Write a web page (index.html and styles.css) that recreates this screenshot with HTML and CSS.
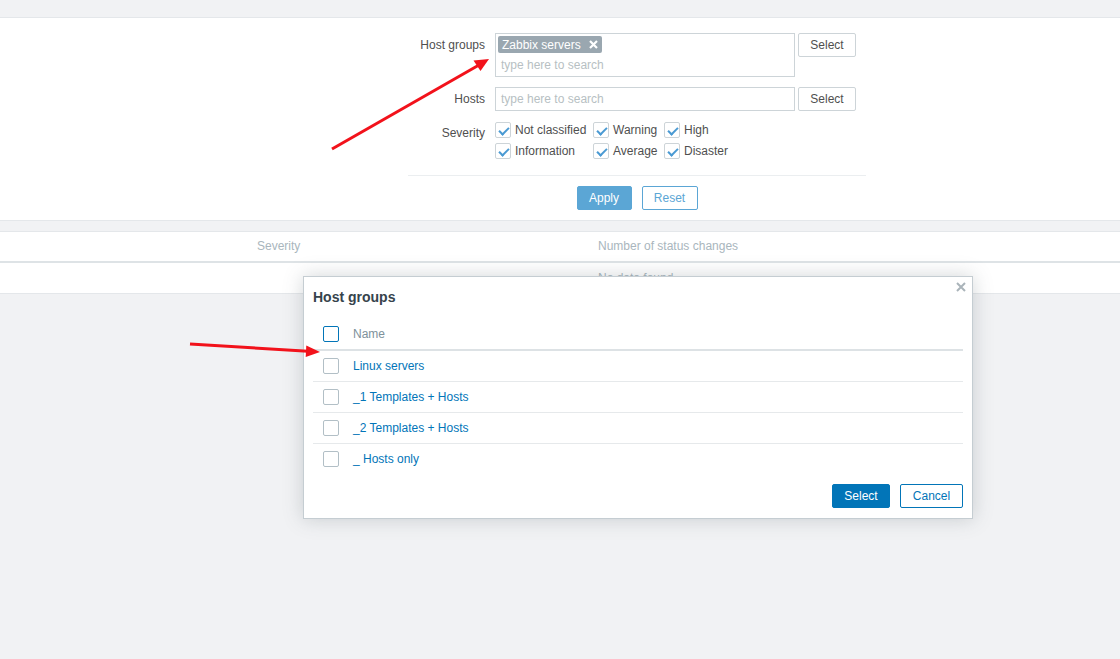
FILE: index.html
```html
<!DOCTYPE html>
<html lang="en">
<head>
    <meta charset="UTF-8">
    <title>Triggers top 100</title>
    <link rel="stylesheet" href="styles.css">
</head>
<body>
    <!-- Filter -->
    <div class="filter">
        <form class="filter-form">
            <label class="form-label">Host groups</label>
            <div class="form-field">
                <div class="multiselect">
                    <span class="tag">Zabbix servers
                        <svg class="tag-remove" width="9" height="9" viewBox="0 0 9 9"><path d="M1 1 L8 8 M8 1 L1 8"/></svg>
                    </span>
                    <span class="placeholder">type here to search</span>
                </div>
                <button type="button" class="btn-grey">Select</button>
            </div>

            <label class="form-label">Hosts</label>
            <div class="form-field">
                <div class="text-input"><span class="placeholder">type here to search</span></div>
                <button type="button" class="btn-grey">Select</button>
            </div>

            <label class="form-label">Severity</label>
            <div class="severity-list">
                <div class="check-item"><span class="checkbox checked"></span>Not classified</div>
                <div class="check-item"><span class="checkbox checked"></span>Warning</div>
                <div class="check-item"><span class="checkbox checked"></span>High</div>
                <div class="check-item"><span class="checkbox checked"></span>Information</div>
                <div class="check-item"><span class="checkbox checked"></span>Average</div>
                <div class="check-item"><span class="checkbox checked"></span>Disaster</div>
            </div>

            <div class="filter-buttons">
                <button type="button" class="btn-apply">Apply</button>
                <button type="button" class="btn-reset">Reset</button>
            </div>
        </form>
    </div>

    <!-- Results -->
    <div class="list-table">
        <div class="list-head">
            <div></div>
            <div>Severity</div>
            <div>Number of status changes</div>
        </div>
        <div class="list-empty">No data found.</div>
    </div>

    <!-- Host groups popup -->
    <div class="overlay-dialog">
        <svg class="dialog-close" width="10" height="10" viewBox="0 0 10 10"><path d="M1 1 L9 9 M9 1 L1 9"/></svg>
        <h4 class="dialog-title">Host groups</h4>
        <table class="dialog-table">
            <thead>
                <tr>
                    <th class="col-check"><span class="checkbox focused"></span></th>
                    <th>Name</th>
                </tr>
            </thead>
            <tbody>
                <tr>
                    <td class="col-check"><span class="checkbox"></span></td>
                    <td><a href="#">Linux servers</a></td>
                </tr>
                <tr>
                    <td class="col-check"><span class="checkbox"></span></td>
                    <td><a href="#">_1 Templates + Hosts</a></td>
                </tr>
                <tr>
                    <td class="col-check"><span class="checkbox"></span></td>
                    <td><a href="#">_2 Templates + Hosts</a></td>
                </tr>
                <tr>
                    <td class="col-check"><span class="checkbox"></span></td>
                    <td><a href="#">_ Hosts only</a></td>
                </tr>
            </tbody>
        </table>
        <div class="dialog-footer">
            <button type="button" class="btn-primary">Select</button>
            <button type="button" class="btn-alt">Cancel</button>
        </div>
    </div>

    <!-- Annotation arrows -->
    <svg class="annotations" width="1120" height="659" viewBox="0 0 1120 659">
        <line x1="332" y1="149" x2="479" y2="65"/>
        <polygon points="489,59 480.5,71 473.5,60.5"/>
        <line x1="190" y1="344" x2="308" y2="351.3"/>
        <polygon points="320,352 305.7,357 306.3,345.5"/>
    </svg>
</body>
</html>
```

FILE: styles.css
```css
* {
    margin: 0;
    padding: 0;
    box-sizing: border-box;
}

body {
    background: #f1f2f4;
    font-family: 'Liberation Sans', Arial, sans-serif;
    font-size: 12px;
    color: #4f4f4f;
    width: 1120px;
    height: 659px;
    overflow: hidden;
    position: relative;
}

button {
    font-family: inherit;
    font-size: 12px;
    cursor: pointer;
}

/* Filter */

.filter {
    margin-top: 17px;
    background: #fff;
    border-top: 1px solid #e4e7ea;
    border-bottom: 1px solid #e4e7ea;
    padding: 15px 0 10px;
}

.filter-form {
    width: 458px;
    margin-left: 408px;
    display: grid;
    grid-template-columns: 77px 1fr;
    column-gap: 10px;
    row-gap: 10px;
}

.form-label {
    text-align: right;
    padding-top: 5px;
    line-height: 14px;
}

.form-field {
    display: flex;
    align-items: flex-start;
    gap: 3px;
}

.multiselect {
    width: 300px;
    height: 44px;
    border: 1px solid #cdd4d8;
    padding: 2px;
    display: flex;
    flex-direction: column;
    align-items: flex-start;
    gap: 5px;
}

.tag {
    display: flex;
    align-items: center;
    gap: 8px;
    background: #9aa7b0;
    color: #fff;
    height: 17px;
    padding: 0 4px;
    border-radius: 2px;
}

.tag-remove path {
    stroke: #fff;
    stroke-width: 2.2;
}

.placeholder {
    color: #b7bfc3;
    padding-left: 3px;
}

.text-input {
    width: 300px;
    height: 24px;
    border: 1px solid #cdd4d8;
    padding: 4px 2px;
    line-height: 14px;
}

.btn-grey {
    width: 58px;
    height: 24px;
    background: #fff;
    border: 1px solid #cdd4d8;
    border-radius: 2px;
    color: #4f4f4f;
}

.severity-list {
    display: grid;
    grid-template-columns: 98px 71px auto;
    row-gap: 5px;
    margin-top: 1px;
}

.check-item {
    display: flex;
    align-items: center;
    gap: 4px;
    height: 16px;
}

.checkbox {
    position: relative;
    display: inline-block;
    width: 16px;
    height: 16px;
    border: 1px solid #b2bfc6;
    border-radius: 2px;
    background: #fff;
    flex-shrink: 0;
}

.checkbox.checked {
    border-color: #cdd4d8;
}

.checkbox.checked::after {
    content: "";
    position: absolute;
    left: 5px;
    top: 2px;
    width: 4px;
    height: 8px;
    border-right: 2px solid #4a9ad3;
    border-bottom: 2px solid #4a9ad3;
    transform: rotate(45deg);
}

.checkbox.focused {
    border-color: #0275b8;
}

.filter-buttons {
    grid-column: 1 / 3;
    display: flex;
    justify-content: center;
    gap: 10px;
    border-top: 1px solid #ebeef0;
    margin-top: 6px;
    padding-top: 10px;
}

.btn-apply {
    width: 55px;
    height: 24px;
    background: #5ba6d5;
    border: 1px solid #5ba6d5;
    border-radius: 2px;
    color: #fff;
}

.btn-reset {
    width: 56px;
    height: 24px;
    background: #fff;
    border: 1px solid #5ba6d5;
    border-radius: 2px;
    color: #5ba6d5;
}

/* Results table */

.list-table {
    margin-top: 10px;
    background: #fff;
    border-top: 1px solid #e4e7ea;
    border-bottom: 1px solid #e4e7ea;
}

.list-head {
    display: grid;
    grid-template-columns: 257px 341px 1fr;
    height: 31px;
    line-height: 29px;
    border-bottom: 2px solid #dee3e6;
    color: #a9b6bd;
}

.list-empty {
    height: 30px;
    line-height: 30px;
    padding-left: 598px;
    color: #a9b6bd;
}

/* Host groups popup */

.overlay-dialog {
    position: absolute;
    left: 303px;
    top: 276px;
    width: 670px;
    background: #fff;
    border: 1px solid #c5cdd2;
    box-shadow: 0 0 18px rgba(80, 90, 100, 0.25);
    padding: 0 9px 10px;
}

.dialog-close {
    position: absolute;
    right: 6px;
    top: 5px;
}

.dialog-close path {
    stroke: #aab4ba;
    stroke-width: 2;
}

.dialog-title {
    font-size: 14px;
    font-weight: bold;
    color: #36434c;
    line-height: 18px;
    padding: 11px 0 12px;
}

.dialog-table {
    width: 100%;
    border-collapse: collapse;
}

.dialog-table th,
.dialog-table td {
    text-align: left;
    height: 31px;
    padding: 0;
    vertical-align: middle;
}

.dialog-table th {
    height: 32px;
    font-weight: normal;
    color: #7e919b;
    border-bottom: 2px solid #dde2e5;
}

.dialog-table td {
    border-bottom: 1px solid #e6e9eb;
}

.dialog-table tr:last-child td {
    border-bottom: none;
}

.dialog-table .col-check {
    width: 40px;
    padding-left: 10px;
    line-height: 0;
}

.dialog-table a {
    color: #0275b8;
    text-decoration: none;
}

.dialog-footer {
    display: flex;
    justify-content: flex-end;
    gap: 10px;
    padding-top: 10px;
}

.btn-primary {
    width: 58px;
    height: 24px;
    background: #0275b8;
    border: 1px solid #0275b8;
    border-radius: 2px;
    color: #fff;
}

.btn-alt {
    width: 63px;
    height: 24px;
    background: #fff;
    border: 1px solid #0275b8;
    border-radius: 2px;
    color: #0275b8;
}

/* Annotation arrows */

.annotations {
    position: absolute;
    left: 0;
    top: 0;
    pointer-events: none;
}

.annotations line {
    stroke: #f2121b;
    stroke-width: 3;
}

.annotations polygon {
    fill: #f2121b;
}
```
